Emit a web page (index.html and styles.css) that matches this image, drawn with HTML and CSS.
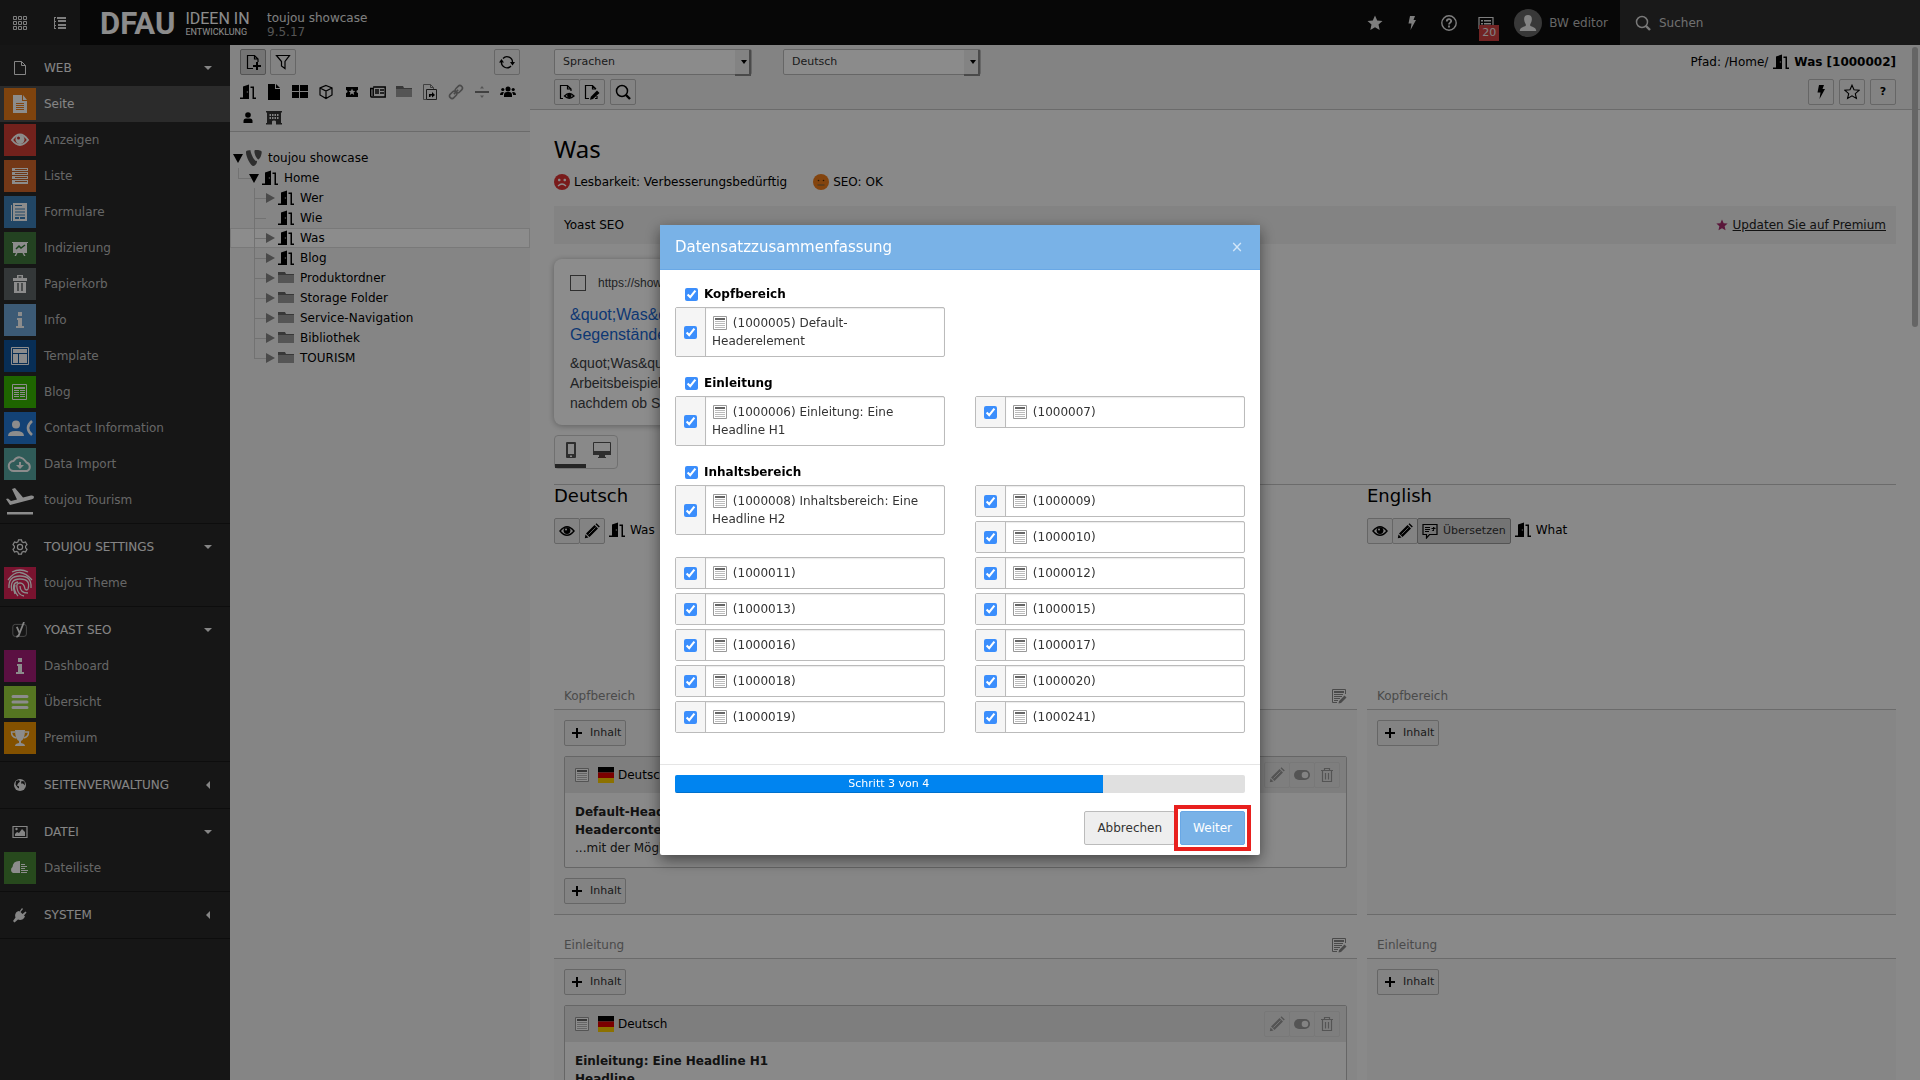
FILE: index.html
```html
<!DOCTYPE html>
<html lang="de">
<head>
<meta charset="utf-8">
<title>toujou showcase</title>
<link rel="stylesheet" href="styles.css">
</head>
<body>
<svg class="sprite" aria-hidden="true">
  <symbol id="grid" viewBox="0 0 16 16"><path fill="none" stroke="currentColor" d="M1.500 1.500h3v3h-3zM6.500 1.500h3v3h-3zM11.500 1.500h3v3h-3zM1.500 6.500h3v3h-3zM6.500 6.500h3v3h-3zM11.500 6.500h3v3h-3zM1.500 11.500h3v3h-3zM6.500 11.500h3v3h-3zM11.500 11.500h3v3h-3z"/></symbol>
  <symbol id="treelist" viewBox="0 0 16 16"><path fill="none" stroke="currentColor" d="M2.500 2v12M2 2.500h2M2 6.500h2M2 10.500h2M2 13.500h2"/><path fill="currentColor" d="M5 2h9v2H5zM6 5h8v2H6zM6 9h8v2H6zM6 12h8v2H6z"/></symbol>
  <symbol id="page" viewBox="0 0 16 16"><path fill="none" stroke="currentColor" d="M2.500 1.500h7l4 4v9h-11zM9.500 1.500v4h4"/></symbol>
  <symbol id="pagefull" viewBox="0 0 16 16"><path fill="currentColor" d="M2 0h7v5h5v11H2zM10 0l4 4h-4z"/></symbol>
  <symbol id="door" viewBox="0 0 16 16"><path fill="currentColor" d="M3 2.500L9 .5V15H0v-1.500h3zM10.500 2.500H14v11h2V15h-3.500V4h-2z"/><circle cx="7.400" cy="8" r=".8" fill="#aaa"/></symbol>
  <symbol id="folder" viewBox="0 0 16 16"><path fill="#9b9b9b" d="M0 4h16v9H0z"/><path fill="#666" d="M0 2h7l1 2h8v1H0z"/></symbol>
  <symbol id="squares" viewBox="0 0 16 16"><path fill="currentColor" d="M0 1h7v6H0zM8 1h8v6H8zM0 8h7v6H0zM8 8h8v6H8z"/></symbol>
  <symbol id="cube" viewBox="0 0 16 16"><path fill="none" stroke="currentColor" stroke-width="1.200" d="M8 1.500l6 2.500v7l-6 3.500L2 11V4zM2 4l6 3 6-3M8 7v7"/></symbol>
  <symbol id="ticket" viewBox="0 0 16 16"><path fill="currentColor" d="M2 3h12v3c-2 0-2 3 0 3v4H2V9c2 0 2-3 0-3z"/><path fill="#eee" d="M8 4.500l1 2.200 2.400.2-1.800 1.600.6 2.400L8 9.600l-2.200 1.300.6-2.400-1.800-1.600 2.400-.2z"/></symbol>
  <symbol id="news" viewBox="0 0 16 16"><path fill="none" stroke="currentColor" stroke-width="1.400" d="M3.200 3h12v10H1.500q-.8 0-.8-1V4.500h2.500V12"/><path fill="#444" d="M5 5h4v5H5zM10 5h4v2h-4zM10 8h4v2h-4z"/></symbol>
  <symbol id="shortcut" viewBox="0 0 16 16"><path fill="none" stroke="#777" d="M4 15.500H1.500V.5h7l3 3V5M8.500.5v3h3"/><path fill="none" stroke="#333" d="M4.500 5.500h10v10h-10z"/><path d="M7 13v-3h3V8l3 3-3 2.500V11.500H8.500V13z"/></symbol>
  <symbol id="link" viewBox="0 0 16 16"><g fill="none" stroke="#888" stroke-width="1.600" transform="rotate(-45 8 8)"><rect x="0" y="5.500" width="8" height="5" rx="2.500"/><rect x="8" y="5.500" width="8" height="5" rx="2.500"/><path d="M5 8h6"/></g></symbol>
  <symbol id="divider" viewBox="0 0 16 16"><path fill="#777" d="M1 7h14v2H1z"/><path fill="#999" d="M8 2l2 2.500H6zM8 14l2-2.500H6z"/></symbol>
  <symbol id="users" viewBox="0 0 16 16"><g fill="currentColor"><circle cx="8" cy="5" r="2.500"/><circle cx="2.800" cy="5.500" r="1.600"/><circle cx="13.200" cy="5.500" r="1.600"/><path d="M4 13V11q0-3 3-3h2q3 0 3 3v2zM0 11q0-3 3-3l1 .5q-1.200 1-1.200 2.500zM16 11q0-3-3-3l-1 .5q1.200 1 1.200 2.500z"/></g></symbol>
  <symbol id="user" viewBox="0 0 16 16"><g fill="currentColor"><circle cx="8" cy="5" r="2.800"/><path d="M3.500 13V11q0-2.500 2.500-2.500h4q2.500 0 2.500 2.500v2z"/></g></symbol>
  <symbol id="building" viewBox="0 0 16 16"><path fill="#333" fill-rule="evenodd" d="M0 1h16v1.500h-1V13h1v1.500h-6v-3q0-1-2-1t-2 1v3H0V13h1V2.500H0zM3.500 4v2H5V4zM6 4v2h1.500V4zM8.500 4v2H10V4zM11 4v2h1.500V4zM3.500 7v2H5V7zM6 7v2h1.500V7zM8.500 7v2H10V7zM11 7v2h1.500V7z"/></symbol>
  <symbol id="pageplus" viewBox="0 0 16 16"><path fill="none" stroke="currentColor" stroke-width="1.200" d="M8 14.500H2.500v-13h7l3.500 3.500V8M9.500 1.500v3.500h3.500"/><path fill="currentColor" d="M11 8h2v3h3v2h-3v3h-2v-3H8v-2h3z"/></symbol>
  <symbol id="filter" viewBox="0 0 16 16"><path fill="none" stroke="currentColor" stroke-width="1.200" d="M1.500 1.500h13l-4.500 6v7l-3.500-2.500V7.500z"/></symbol>
  <symbol id="refresh" viewBox="0 0 16 16"><path fill="none" stroke="currentColor" stroke-width="1.300" d="M4 4.500a5.500 5.500 0 0 1 9.500 4M12 12A5.500 5.500 0 0 1 2.500 7.500"/><path fill="currentColor" d="M11 8h5l-2.500 3.500zM0 8.500h5L2.500 5z"/></symbol>
  <symbol id="pageeye" viewBox="0 0 16 16"><path fill="none" stroke="currentColor" stroke-width="1.200" d="M4 14.500H1.500v-13h7l3.500 3.500V7M8.500 1.500v3.500h3.500"/><path fill="none" stroke="currentColor" stroke-width="1.300" d="M5.500 12q4.800-5 9.500 0-4.700 4.500-9.500 0z"/><circle cx="10.300" cy="11.800" r="2.200" fill="currentColor"/></symbol>
  <symbol id="pageedit" viewBox="0 0 16 16"><path fill="none" stroke="currentColor" stroke-width="1.200" d="M5 14.500H1.500v-13h7l3.500 3.500M8.500 1.500v3.500h3.500M11 14.500h2V12"/><path fill="currentColor" d="M13 6.500L15.500 9 9 15l-3 .8.800-3z"/></symbol>
  <symbol id="search" viewBox="0 0 16 16"><circle cx="7" cy="7" r="5.500" fill="none" stroke="currentColor" stroke-width="1.500"/><path stroke="currentColor" stroke-width="2.400" d="M11 11l4 4"/></symbol>
  <symbol id="bolt" viewBox="0 0 16 16"><path fill="currentColor" d="M6 1h5L9.500 5H12L6.500 15 7.500 8.500H4.500z"/></symbol>
  <symbol id="star" viewBox="0 0 16 16"><path fill="currentColor" d="M8 .5l2.200 5 5.300.5-4 3.600 1.200 5.400L8 12.200 3.300 15l1.200-5.400-4-3.600 5.300-.5z"/></symbol>
  <symbol id="staro" viewBox="0 0 16 16"><path fill="none" stroke="currentColor" stroke-width="1.100" d="M8 1.200l2 4.600 5 .5-3.700 3.400L12.400 14.500 8 11.900 3.600 14.500l1.100-4.800L1 6.300l5-.5z"/></symbol>
  <symbol id="help" viewBox="0 0 16 16"><circle cx="8" cy="8" r="7.200" fill="none" stroke="currentColor" stroke-width="1.400"/><path fill="none" stroke="currentColor" stroke-width="1.800" d="M5.800 6.500c0-3 4.400-3 4.400-.4C10.200 7.700 8 7.600 8 9.600M8 10.600v2"/></symbol>
  <symbol id="sys" viewBox="0 0 16 16"><path fill="none" stroke="currentColor" stroke-width="1.200" d="M1 2.500h14v11H1z"/><path fill="currentColor" d="M3 5h2v1.500H3zM6 5h7v1.500H6zM3 8h2v1.500H3zM6 8h7v1.500H6z"/></symbol>
  <symbol id="avatar" viewBox="0 0 28 28"><circle cx="14" cy="14" r="14" fill="#666"/><path fill="#eee" d="M14 6c3 0 4.200 2 3.800 5-.3 2-1 3.500-1.600 4.300v1.500c2 1.200 6 1.600 6 5.200H5.800c0-3.600 4-4 6-5.200v-1.500C11.200 14.500 10.500 13 10.200 11 9.800 8 11 6 14 6z"/></symbol>
  <symbol id="typo3" viewBox="0 0 16 16"><path fill="#555" d="M11 10.800c-.3.100-.5.100-.8.100-2.300 0-5.700-8-5.700-10.600 0-.2 0-.3.100-.3C2.500.2.600.7.200 1.200 0 1.400 0 1.800 0 2.400 0 6.400 4.400 16 7.500 16c1.400 0 3.800-2.400 3.500-5.200zM10 0c2.900 0 5.700.5 5.700 2.100 0 3.300-2 7.300-3.100 7.300C10.700 9.400 8.400 4.100 8.400 1.500 8.400.300 8.800 0 10 0z"/></symbol>
  <symbol id="record" viewBox="0 0 16 16"><path fill="#fff" stroke="#999" d="M1.500 1.500h13v13h-13z"/><path fill="#666" d="M3 3h10v2H3z"/><path fill="#bbb" d="M3 6h10v1H3zM3 8h10v1H3zM3 10h10v1H3zM3 12h10v1H3z"/></symbol>
  <symbol id="flag" viewBox="0 0 16 16"><path d="M0 0h16v5.500H0z"/><path fill="#e00000" d="M0 5.500h16V11H0z"/><path fill="#ffce00" d="M0 11h16v5H0z"/></symbol>
  <symbol id="eye" viewBox="0 0 16 16"><path fill="none" stroke="currentColor" stroke-width="1.400" d="M1 8q7-8.500 14 0-7 8.500-14 0z"/><circle cx="8" cy="7.600" r="3.400" fill="currentColor"/><circle cx="7" cy="6.500" r="1" fill="#eee"/></symbol>
  <symbol id="pencil" viewBox="0 0 16 16"><path fill="currentColor" d="M10.500 2l3.500 3.500-8.500 8.500L2 10.500zM1.500 11.500L4.500 14.500.8 15.200zM11.500 1.200L12.500.3 15.800 3.500l-1 1z"/><path stroke="#eee" stroke-width=".7" d="M4.500 11.500l7-7"/></symbol>
  <symbol id="toggle" viewBox="0 0 16 16"><rect y="3" width="16" height="10" rx="5" fill="currentColor"/><circle cx="11" cy="8" r="3.300" fill="#eee"/></symbol>
  <symbol id="trash" viewBox="0 0 16 16"><path fill="none" stroke="currentColor" stroke-width="1.200" d="M2 3.500h12M5.500 3V1.500h5V3M3.500 4v10.500h9V4M6.500 6v6.500M9.500 6v6.500"/></symbol>
  <symbol id="listedit" viewBox="0 0 16 16"><path fill="none" stroke="currentColor" d="M6 14.500H1.500v-13h13V6"/><path fill="currentColor" d="M3 3h10v2H3zM3 6h9v1H3zM3 8h8v1H3zM3 10h6v1H3zM3 12h4v1H3zM13.500 7.500L15.500 9.500 10 15l-2.500.6.6-2.500z"/></symbol>
  <symbol id="translate" viewBox="0 0 16 16"><path fill="none" stroke="currentColor" stroke-width="1.200" d="M1 1.500h14v10H7.500L4.500 15v-3.500H1z"/><path fill="currentColor" d="M3 4h5v1H3zM3 6h5v1H3zM3 8h4v1H3zM9.500 5h4v1h-4zM11 4h1v4h-1zM9.800 7.300l3-3 .6.6-3 3z"/></symbol>
  <symbol id="plus" viewBox="0 0 16 16"><path fill="currentColor" d="M7 3h2v4h4v2H9v4H7V9H3V7h4z"/></symbol>
  <symbol id="phone" viewBox="0 0 16 16"><path fill="#555" fill-rule="evenodd" d="M4 0h8q1 0 1 1v14q0 1-1 1H4q-1 0-1-1V1q0-1 1-1zM5 2v10h6V2zM7 13.500V15h2v-1.500z"/></symbol>
  <symbol id="desktop" viewBox="0 0 18 16"><path fill="none" stroke="#555" d="M.5.500h17v9H.5z"/><path fill="#555" d="M0 9h18v4h-6v2h1v1H5v-1h1v-2H0z"/></symbol>
  <symbol id="sad" viewBox="0 0 16 16"><circle cx="8" cy="8" r="8" fill="#dc3232"/><path fill="none" stroke="#fff" stroke-width="1.300" d="M4 12q4-4 8 0M4 6h2.500M5.200 4.800v2.500M9.500 6H12M10.800 4.800v2.500"/></symbol>
  <symbol id="neutral" viewBox="0 0 16 16"><circle cx="8" cy="8" r="8" fill="#ee7c1b"/><path fill="none" stroke="#8a6a40" stroke-width="1.300" d="M4.500 11h7"/><circle cx="5.500" cy="6.500" r=".8" fill="#532b00"/><circle cx="10.500" cy="6.500" r=".8" fill="#532b00"/></symbol>
  <symbol id="gear" viewBox="0 0 16 16"><path fill="none" stroke="currentColor" stroke-width="1.200" d="M6.500.8h3l.5 2 1.500.8 2-.6 1.500 2.600L13.600 7.200v1.600L15 10.400 13.500 13l-2-.6-1.500.8-.5 2h-3l-.5-2-1.500-.8-2 .6L1 10.400l1.400-1.600V7.200L1 5.600 2.500 3l2 .6 1.500-.8z"/><circle cx="8" cy="8" r="2.600" fill="none" stroke="currentColor" stroke-width="1.200"/></symbol>
  <symbol id="yoast" viewBox="0 0 20 20"><rect x="1" y="3" width="17" height="15" rx="3" fill="none" stroke="#999"/><path fill="none" stroke="currentColor" stroke-width="2.200" d="M6 6l3.500 8M15 0L9.500 14q-1 4-4 4.500"/></symbol>
  <symbol id="globe" viewBox="0 0 16 16"><circle cx="8" cy="8" r="6" fill="currentColor"/><path fill="#222" d="M4 4l3-1 1 1.500-2 2-1 2 2 1v2l-1.500-1-2-3zM9.500 4l3 .5.500 4-2-2-2 0z"/></symbol>
  <symbol id="image" viewBox="0 0 16 16"><path fill="none" stroke="currentColor" stroke-width="1.200" d="M1 2.500h14v11H1z"/><path fill="currentColor" d="M3 12V10l2-2 2 1 3-4 3 3v4z"/><circle cx="4.500" cy="5" r="1.200" fill="currentColor"/></symbol>
  <symbol id="plug" viewBox="0 0 16 16"><path fill="currentColor" d="M10 1l1 1-2.500 3 2 2L13.500 4.500l1 1L12 8.500l1 1c-1.500 3.500-5 4-7 3L2.500 15.500 1 14l2.500-3.500C2.500 8 3.500 5 6.500 4l1 .5z"/></symbol>
  <symbol id="m-page" viewBox="0 0 32 32"><path fill="#fff" d="M9 7h9v6h5v12H9zM19 7l4 5h-4z"/><path stroke="#ee8020" d="M12 15.500h8M12 17.500h8M12 19.500h8M12 21.500h8"/></symbol>
  <symbol id="m-eye" viewBox="0 0 32 32"><path fill="none" stroke="#fff" stroke-width="2" d="M8 16q8-11 16 0-8 10-16 0z"/><circle cx="16" cy="15.500" r="4.500" fill="#fff"/><circle cx="14.500" cy="14" r="1.500" fill="#c33"/></symbol>
  <symbol id="m-list" viewBox="0 0 32 32"><path fill="#fff" d="M8 8h16v16H8z"/><path stroke="#c8672a" d="M8 11.500h16M8 15.500h16M8 19.500h16"/><path stroke="#c8672a" d="M11 9.500h12M11 13.500h12M11 17.500h12M11 21.500h12"/></symbol>
  <symbol id="m-form" viewBox="0 0 32 32"><path fill="#fff" d="M9 7h14v18H9zM7 9h1v16H7z"/><path fill="none" stroke="#3b80bb" d="M11 9.500h7M11 13h10M11 16h10M11 19h10"/><path fill="#3b80bb" d="M11 21h4v2h-4zM16 21h5v2h-5z"/></symbol>
  <symbol id="m-chart" viewBox="0 0 32 32"><path fill="#fff" d="M8 10h16v1H8zM9 11h14v10H9zM12 21h1.500L12 24h-1.500zM18.500 21H20l1.500 3H20z"/><path fill="none" stroke="#2f7d32" stroke-width="1.500" d="M12 17l3-3 2 2 4-3"/></symbol>
  <symbol id="m-trash" viewBox="0 0 32 32"><path fill="#fff" d="M9 10h4V7h6v3h4v3H9zM10 14h12v11H10z"/><path stroke="#5d6566" stroke-width="1.500" d="M14 15v8M18 15v8M14.500 9h3"/></symbol>
  <symbol id="m-info" viewBox="0 0 32 32"><path fill="#fff" d="M14 8h4v4h-4zM13 14h5v8h2v2h-8v-2h2v-6h-1z"/></symbol>
  <symbol id="m-tpl" viewBox="0 0 32 32"><path fill="none" stroke="#fff" d="M7.500 7.500h17v17h-17z"/><path fill="#fff" d="M9 9h14v4H9zM9 14h5v9H9zM15 14h8v9h-8z"/></symbol>
  <symbol id="m-blog" viewBox="0 0 32 32"><path fill="none" stroke="#fff" d="M8.500 8.500h14v15h-14z"/><path stroke="#fff" d="M10 12h11" stroke-width="2"/><path stroke="#fff" d="M10 14.500h5M16 14.500h5M10 16.500h5M16 16.500h5M10 18.500h5M16 18.500h5M10 20.500h5M16 20.500h5"/></symbol>
  <symbol id="m-contact" viewBox="0 0 32 32"><circle cx="12" cy="12.500" r="4" fill="#fff"/><path fill="#fff" d="M4 24q0-5 8-5t8 5z"/><path fill="none" stroke="#fff" stroke-width="2.600" d="M28 9q-8 7 0 14"/></symbol>
  <symbol id="m-cloud" viewBox="0 0 32 32"><path fill="none" stroke="#fff" stroke-width="2" d="M10 23a5 5 0 0 1-.5-10q6-8 13 1.500a4.500 4.500 0 0 1 .5 8.500z"/><path fill="#fff" d="M15 14h2v3h3l-4 4-4-4h3z"/></symbol>
  <symbol id="m-plane" viewBox="0 0 32 32"><path fill="#fff" d="M3 28h26v2.500H3zM2 15l2-.5 3 2.500 6-1.500L8 5l3-1 8 9.500 8-2q3-.3 3 1.500t-2 2.300L6 21z"/></symbol>
  <symbol id="m-finger" viewBox="0 0 32 32"><g fill="none" stroke="#fff" stroke-width="1.300"><path d="M8 5q8-4 16 0M4 13Q10 5 16 5.500T28 13M5 21Q4 9 16 9t11 12M8 24Q5 12 16 12t8 10q-1 2-3 0-1-6-5-6t-3 5q1 7 7 8M11 27Q7 16 14 15M16 19q0 7 8 7M14 29Q9 23 11 18"/></g></symbol>
  <symbol id="m-lines" viewBox="0 0 32 32"><path stroke="#fff" stroke-width="3" stroke-linecap="round" d="M9 10.500h14M9 16h14M9 21.500h14"/></symbol>
  <symbol id="m-cup" viewBox="0 0 32 32"><path fill="#fff" d="M11 8h10q0 9-4 11v2q4 .5 4 3H11q0-2.500 4-3v-2q-4-2-4-11z"/><path fill="none" stroke="#fff" stroke-width="1.500" d="M11 10H7.500q0 5 5 6M21 10h3.500q0 5-5 6"/></symbol>
  <symbol id="m-files" viewBox="0 0 32 32"><path fill="#fff" d="M16 9v12h-7a3.500 3.500 0 0 1-.5-6Q9 8.500 16 9z"/><path stroke="#fff" d="M17 12.500h4M17 14.500h6M17 16.500h4M17 18.500h7M17 20.500h6"/></symbol>
</svg>

<header class="topbar">
  <div class="topbar-switch">
    <button class="icon-btn" aria-label="Module"><svg class="ic"><use href="#grid"/></svg></button>
    <button class="icon-btn" aria-label="Seitenbaum"><svg class="ic"><use href="#treelist"/></svg></button>
  </div>
  <div class="logo"><span class="logo-name">DFAU</span><span class="logo-claim"><span class="claim-top">IDEEN IN</span><span class="claim-bottom">ENTWICKLUNG</span></span></div>
  <div class="site"><span>toujou showcase</span><span class="site-version">9.5.17</span></div>
  <nav class="tools">
    <button class="icon-btn" aria-label="Lesezeichen"><svg class="ic"><use href="#star"/></svg></button>
    <button class="icon-btn" aria-label="Cache"><svg class="ic"><use href="#bolt"/></svg></button>
    <button class="icon-btn" aria-label="Hilfe"><svg class="ic"><use href="#help"/></svg></button>
    <button class="icon-btn" aria-label="Systeminformation"><svg class="ic"><use href="#sys"/></svg><span class="badge">20</span></button>
    <button class="profile"><svg class="avatar"><use href="#avatar"/></svg>BW editor</button>
  </nav>
  <label class="search"><svg class="ic"><use href="#search"/></svg><input type="text" placeholder="Suchen" aria-label="Suchen"></label>
</header>

<div class="shell">
  <nav class="modules">
    <section class="group">
      <button class="group-head"><svg class="ic"><use href="#page"/></svg><span>WEB</span><i class="caret"></i></button>
      <a href="#" class="module active"><svg class="tile t-page"><use href="#m-page"/></svg>Seite</a>
      <a href="#" class="module"><svg class="tile t-view"><use href="#m-eye"/></svg>Anzeigen</a>
      <a href="#" class="module"><svg class="tile t-list"><use href="#m-list"/></svg>Liste</a>
      <a href="#" class="module"><svg class="tile t-form"><use href="#m-form"/></svg>Formulare</a>
      <a href="#" class="module"><svg class="tile t-index"><use href="#m-chart"/></svg>Indizierung</a>
      <a href="#" class="module"><svg class="tile t-trash"><use href="#m-trash"/></svg>Papierkorb</a>
      <a href="#" class="module"><svg class="tile t-info"><use href="#m-info"/></svg>Info</a>
      <a href="#" class="module"><svg class="tile t-tpl"><use href="#m-tpl"/></svg>Template</a>
      <a href="#" class="module"><svg class="tile t-blog"><use href="#m-blog"/></svg>Blog</a>
      <a href="#" class="module"><svg class="tile t-contact"><use href="#m-contact"/></svg>Contact Information</a>
      <a href="#" class="module"><svg class="tile t-import"><use href="#m-cloud"/></svg>Data Import</a>
      <a href="#" class="module"><svg class="tile"><use href="#m-plane"/></svg>toujou Tourism</a>
    </section>
    <section class="group">
      <button class="group-head"><svg class="ic"><use href="#gear"/></svg><span>TOUJOU SETTINGS</span><i class="caret"></i></button>
      <a href="#" class="module"><svg class="tile t-theme"><use href="#m-finger"/></svg>toujou Theme</a>
    </section>
    <section class="group">
      <button class="group-head"><svg class="ic"><use href="#yoast"/></svg><span>YOAST SEO</span><i class="caret"></i></button>
      <a href="#" class="module"><svg class="tile t-dash"><use href="#m-info"/></svg>Dashboard</a>
      <a href="#" class="module"><svg class="tile t-over"><use href="#m-lines"/></svg>Übersicht</a>
      <a href="#" class="module"><svg class="tile t-prem"><use href="#m-cup"/></svg>Premium</a>
    </section>
    <section class="group">
      <button class="group-head"><svg class="ic"><use href="#globe"/></svg><span>SEITENVERWALTUNG</span><i class="caret closed"></i></button>
    </section>
    <section class="group">
      <button class="group-head"><svg class="ic"><use href="#image"/></svg><span>DATEI</span><i class="caret"></i></button>
      <a href="#" class="module"><svg class="tile t-files"><use href="#m-files"/></svg>Dateiliste</a>
    </section>
    <section class="group">
      <button class="group-head"><svg class="ic"><use href="#plug"/></svg><span>SYSTEM</span><i class="caret closed"></i></button>
    </section>
  </nav>

  <aside class="pagetree">
    <div class="tree-tools">
      <div class="tree-bar">
        <button class="btn pressed" aria-label="Neue Seite"><svg class="ic"><use href="#pageplus"/></svg></button>
        <button class="btn" aria-label="Filter"><svg class="ic"><use href="#filter"/></svg></button>
        <button class="btn push" aria-label="Neu laden"><svg class="ic"><use href="#refresh"/></svg></button>
      </div>
      <div class="doktypes">
        <svg class="ic"><use href="#door"/></svg><svg class="ic"><use href="#pagefull"/></svg><svg class="ic"><use href="#squares"/></svg><svg class="ic"><use href="#cube"/></svg><svg class="ic"><use href="#ticket"/></svg><svg class="ic"><use href="#news"/></svg><svg class="ic"><use href="#folder"/></svg><svg class="ic"><use href="#shortcut"/></svg><svg class="ic"><use href="#link"/></svg><svg class="ic"><use href="#divider"/></svg><svg class="ic"><use href="#users"/></svg><svg class="ic"><use href="#user"/></svg><svg class="ic"><use href="#building"/></svg>
      </div>
    </div>
    <ul class="tree">
      <li class="node root"><i class="arrow open"></i><svg class="ic"><use href="#typo3"/></svg>toujou showcase</li>
      <li class="node home"><i class="arrow open"></i><svg class="ic"><use href="#door"/></svg>Home</li>
      <li class="node leaf"><i class="arrow"></i><svg class="ic"><use href="#door"/></svg>Wer</li>
      <li class="node leaf"><i class="arrow none"></i><svg class="ic"><use href="#door"/></svg>Wie</li>
      <li class="node leaf selected"><i class="arrow"></i><svg class="ic"><use href="#door"/></svg>Was</li>
      <li class="node leaf"><i class="arrow"></i><svg class="ic"><use href="#door"/></svg>Blog</li>
      <li class="node leaf"><i class="arrow"></i><svg class="ic"><use href="#folder"/></svg>Produktordner</li>
      <li class="node leaf"><i class="arrow"></i><svg class="ic"><use href="#folder"/></svg>Storage Folder</li>
      <li class="node leaf"><i class="arrow"></i><svg class="ic"><use href="#folder"/></svg>Service-Navigation</li>
      <li class="node leaf"><i class="arrow"></i><svg class="ic"><use href="#folder"/></svg>Bibliothek</li>
      <li class="node leaf last"><i class="arrow"></i><svg class="ic"><use href="#folder"/></svg>TOURISM</li>
    </ul>
  </aside>

  <main class="content">
    <div class="docheader">
      <div class="doc-row">
        <div class="selects">
          <span class="select"><select aria-label="Ansicht"><option>Sprachen</option></select></span>
          <span class="select"><select aria-label="Sprache"><option>Deutsch</option></select></span>
        </div>
        <div class="path">Pfad: /Home/ <svg class="ic"><use href="#door"/></svg> <strong>Was [1000002]</strong></div>
      </div>
      <div class="doc-row">
        <div class="btn-row">
          <div class="btn-group"><button class="btn" aria-label="Ansehen"><svg class="ic"><use href="#pageeye"/></svg></button><button class="btn" aria-label="Bearbeiten"><svg class="ic"><use href="#pageedit"/></svg></button></div>
          <button class="btn" aria-label="Suche"><svg class="ic"><use href="#search"/></svg></button>
        </div>
        <div class="btn-row">
          <button class="btn" aria-label="Cache löschen"><svg class="ic"><use href="#bolt"/></svg></button>
          <button class="btn" aria-label="Lesezeichen"><svg class="ic"><use href="#staro"/></svg></button>
          <button class="btn"><strong>?</strong></button>
        </div>
      </div>
    </div>

    <div class="body">
      <h1>Was</h1>
      <div class="scores">
        <span class="score"><svg class="ic"><use href="#sad"/></svg>Lesbarkeit: Verbesserungsbedürftig</span>
        <span class="score"><svg class="ic"><use href="#neutral"/></svg>SEO: OK</span>
      </div>
      <div class="yoast-bar"><span>Yoast SEO</span><span class="premium"><svg class="ic-small"><use href="#star"/></svg><a href="#">Updaten Sie auf Premium</a></span></div>
      <div class="snippet">
        <div class="snippet-url"><span class="favicon"></span>https://showcase.toujou.de</div>
        <div class="snippet-title">&amp;quot;Was&amp;quot; – Themen und<br>Gegenstände</div>
        <p>&amp;quot;Was&amp;quot; zeigt Ihnen<br>Arbeitsbeispiele, je<br>nachdem ob Sie suchen</p>
      </div>
      <div class="devices">
        <button class="device on" aria-label="Mobil"><svg class="ic"><use href="#phone"/></svg></button>
        <button class="device" aria-label="Desktop"><svg class="ic-wide"><use href="#desktop"/></svg></button>
      </div>

      <div class="languages">
        <div class="lang">
          <h2>Deutsch</h2>
          <div class="lang-tools"><div class="btn-group"><button class="btn" aria-label="Ansehen"><svg class="ic"><use href="#eye"/></svg></button><button class="btn" aria-label="Bearbeiten"><svg class="ic"><use href="#pencil"/></svg></button></div><span class="lang-page"><svg class="ic"><use href="#door"/></svg>Was</span></div>
        </div>
        <div class="lang">
          <h2>English</h2>
          <div class="lang-tools"><div class="btn-group"><button class="btn" aria-label="Ansehen"><svg class="ic"><use href="#eye"/></svg></button><button class="btn" aria-label="Bearbeiten"><svg class="ic"><use href="#pencil"/></svg></button><button class="btn pressed text"><svg class="ic"><use href="#translate"/></svg>Übersetzen</button></div><span class="lang-page"><svg class="ic"><use href="#door"/></svg>What</span></div>
        </div>

        <section class="col">
          <div class="col-head">Kopfbereich<svg class="ic"><use href="#listedit"/></svg></div>
          <div class="col-body">
            <button class="btn text"><svg class="ic"><use href="#plus"/></svg>Inhalt</button>
            <article class="element">
              <div class="element-head"><svg class="ic"><use href="#record"/></svg><svg class="ic"><use href="#flag"/></svg><span>Deutsch</span><div class="btn-group faded"><button class="btn" aria-label="Bearbeiten"><svg class="ic"><use href="#pencil"/></svg></button><button class="btn" aria-label="Umschalten"><svg class="ic"><use href="#toggle"/></svg></button><button class="btn" aria-label="Löschen"><svg class="ic"><use href="#trash"/></svg></button></div></div>
              <div class="element-body"><strong>Default-Headerelement</strong><br><strong>Headercontent</strong><br>...mit der Möglichkeit, Inhalte einzufügen</div>
            </article>
            <button class="btn text"><svg class="ic"><use href="#plus"/></svg>Inhalt</button>
          </div>
        </section>
        <section class="col">
          <div class="col-head">Kopfbereich</div>
          <div class="col-body"><button class="btn text"><svg class="ic"><use href="#plus"/></svg>Inhalt</button></div>
        </section>

        <section class="col">
          <div class="col-head">Einleitung<svg class="ic"><use href="#listedit"/></svg></div>
          <div class="col-body">
            <button class="btn text"><svg class="ic"><use href="#plus"/></svg>Inhalt</button>
            <article class="element">
              <div class="element-head"><svg class="ic"><use href="#record"/></svg><svg class="ic"><use href="#flag"/></svg><span>Deutsch</span><div class="btn-group faded"><button class="btn" aria-label="Bearbeiten"><svg class="ic"><use href="#pencil"/></svg></button><button class="btn" aria-label="Umschalten"><svg class="ic"><use href="#toggle"/></svg></button><button class="btn" aria-label="Löschen"><svg class="ic"><use href="#trash"/></svg></button></div></div>
              <div class="element-body"><strong>Einleitung: Eine Headline H1</strong><br><strong>Headline</strong></div>
            </article>
          </div>
        </section>
        <section class="col">
          <div class="col-head">Einleitung</div>
          <div class="col-body"><button class="btn text"><svg class="ic"><use href="#plus"/></svg>Inhalt</button></div>
        </section>
      </div>
    </div>
    <div class="scroll-thumb"></div>
  </main>
</div>

<div class="backdrop">
  <div class="modal" role="dialog" aria-labelledby="modal-title">
    <div class="modal-head"><h4 id="modal-title">Datensatzzusammenfassung</h4><button class="close" aria-label="Schließen">×</button></div>
    <div class="modal-body">
      <section>
        <label class="group-check"><input type="checkbox" checked>Kopfbereich</label>
        <div class="records">
          <label class="record"><span class="check"><input type="checkbox" checked></span><span class="record-text"><svg class="ic"><use href="#record"/></svg> (1000005) Default-Headerelement</span></label>
        </div>
      </section>
      <section>
        <label class="group-check"><input type="checkbox" checked>Einleitung</label>
        <div class="records">
          <label class="record"><span class="check"><input type="checkbox" checked></span><span class="record-text"><svg class="ic"><use href="#record"/></svg> (1000006) Einleitung: Eine Headline H1</span></label>
          <label class="record"><span class="check"><input type="checkbox" checked></span><span class="record-text"><svg class="ic"><use href="#record"/></svg> (1000007)</span></label>
        </div>
      </section>
      <section>
        <label class="group-check"><input type="checkbox" checked>Inhaltsbereich</label>
        <div class="records">
          <label class="record tall"><span class="check"><input type="checkbox" checked></span><span class="record-text"><svg class="ic"><use href="#record"/></svg> (1000008) Inhaltsbereich: Eine Headline H2</span></label>
          <label class="record"><span class="check"><input type="checkbox" checked></span><span class="record-text"><svg class="ic"><use href="#record"/></svg> (1000009)</span></label>
          <label class="record"><span class="check"><input type="checkbox" checked></span><span class="record-text"><svg class="ic"><use href="#record"/></svg> (1000010)</span></label>
          <label class="record"><span class="check"><input type="checkbox" checked></span><span class="record-text"><svg class="ic"><use href="#record"/></svg> (1000011)</span></label>
          <label class="record"><span class="check"><input type="checkbox" checked></span><span class="record-text"><svg class="ic"><use href="#record"/></svg> (1000012)</span></label>
          <label class="record"><span class="check"><input type="checkbox" checked></span><span class="record-text"><svg class="ic"><use href="#record"/></svg> (1000013)</span></label>
          <label class="record"><span class="check"><input type="checkbox" checked></span><span class="record-text"><svg class="ic"><use href="#record"/></svg> (1000015)</span></label>
          <label class="record"><span class="check"><input type="checkbox" checked></span><span class="record-text"><svg class="ic"><use href="#record"/></svg> (1000016)</span></label>
          <label class="record"><span class="check"><input type="checkbox" checked></span><span class="record-text"><svg class="ic"><use href="#record"/></svg> (1000017)</span></label>
          <label class="record"><span class="check"><input type="checkbox" checked></span><span class="record-text"><svg class="ic"><use href="#record"/></svg> (1000018)</span></label>
          <label class="record"><span class="check"><input type="checkbox" checked></span><span class="record-text"><svg class="ic"><use href="#record"/></svg> (1000020)</span></label>
          <label class="record"><span class="check"><input type="checkbox" checked></span><span class="record-text"><svg class="ic"><use href="#record"/></svg> (1000019)</span></label>
          <label class="record"><span class="check"><input type="checkbox" checked></span><span class="record-text"><svg class="ic"><use href="#record"/></svg> (1000241)</span></label>
        </div>
      </section>
    </div>
    <div class="modal-foot">
      <div class="progress"><div class="progress-bar" style="width:75%">Schritt 3 von 4</div></div>
      <div class="actions"><button class="action">Abbrechen</button><button class="action primary">Weiter</button></div>
    </div>
  </div>
</div>
</body>
</html>
```
FILE: styles.css
```css
* { box-sizing: border-box; }

body {
  margin: 0;
  height: 100vh;
  display: flex;
  flex-direction: column;
  overflow: hidden;
  background: #fafafa;
  color: #000;
  font: 12px/18px Verdana, "DejaVu Sans", sans-serif;
}

button, input, select { font: inherit; color: inherit; }
button { cursor: pointer; }
a { color: inherit; }
h1, h2, h4, p, ul { margin: 0; padding: 0; font-weight: 400; }

.sprite { display: none; }
.ic { width: 16px; height: 16px; flex: none; overflow: visible; }
.ic-wide { width: 18px; height: 16px; flex: none; }
.ic-small { width: 12px; height: 12px; flex: none; }

/* Top bar */
.topbar { display: flex; align-items: stretch; height: 45px; flex: none; background: #0d0d0d; color: #e6e6e6; }
.topbar-switch { display: flex; width: 80px; background: #262626; }
.icon-btn { position: relative; display: flex; flex: 1; align-items: center; justify-content: center; padding: 0; border: 0; background: none; }
.logo { display: flex; align-items: center; gap: 10px; width: 152px; margin-left: 20px; padding-top: 3px; color: #fff; font-family: Roboto, sans-serif; white-space: nowrap; }
.logo-name { font-size: 31px; line-height: 36px; font-weight: 700; }
.logo-claim { display: flex; flex-direction: column; }
.claim-top { font-size: 16px; line-height: 16px; }
.claim-bottom { font-size: 9px; line-height: 11px; }
.site { display: flex; flex-direction: column; justify-content: center; margin-left: 15px; padding-top: 4px; line-height: 14px; }
.site-version { color: #999; }
.tools { display: flex; margin-left: auto; }
.tools .icon-btn { width: 37px; flex: none; }
.badge { position: absolute; left: 12px; top: 25px; width: 20px; height: 16px; background: #d04040; color: #eee; font-size: 11px; line-height: 16px; text-align: center; }
.profile { display: flex; align-items: center; gap: 7px; padding: 0 12px 0 10px; border: 0; background: none; color: #bbb; }
.avatar { width: 28px; height: 28px; }
.search { display: flex; align-items: center; gap: 8px; width: 300px; padding-left: 15px; background: #2e2e2e; color: #ddd; }
.search input { flex: 1; min-width: 0; padding: 0; border: 0; background: none; }
.search input::placeholder { color: #ccc; opacity: 1; }

.shell { display: flex; flex: 1; min-height: 0; }

/* Module menu */
.modules { width: 230px; flex: none; background: #292929; color: #bbb; overflow: hidden; }
.group { padding: 5px 0; border-bottom: 1px solid #181818; }
.group-head { display: flex; align-items: center; width: 100%; height: 36px; padding: 0 18px 0 12px; gap: 16px; border: 0; background: none; color: #f2f2f2; }
.caret { margin-left: auto; border: 4px solid transparent; border-top-color: currentColor; border-bottom: 0; }
.caret.closed { margin-right: 2px; border: 4px solid transparent; border-right-color: currentColor; border-left: 0; }
.module { display: flex; align-items: center; gap: 8px; height: 36px; padding-left: 4px; text-decoration: none; }
.module.active { background: #4f4f4f; color: #f2f2f2; }
.tile { width: 32px; height: 32px; }
.t-page { background: #e67a1a; }
.t-view { background: #d03c34; }
.t-list { background: #d1672a; }
.t-form { background: #3c80b8; }
.t-index { background: #40783c; }
.t-trash { background: #5d6566; }
.t-info { background: #6da4d6; }
.t-tpl { background: #10559b; }
.t-blog { background: #38b800; }
.t-contact { background: #2479d6; }
.t-import { background: #57a6a0; }
.t-theme { background: #dc2456; }
.t-dash { background: #a61e78; }
.t-over { background: #9bd63c; }
.t-prem { background: #ee9400; }
.t-files { background: #488536; }

/* Page tree */
.pagetree { width: 300px; flex: none; background: #f3f3f3; }
.tree-tools { padding: 4px 10px 4px; background: #eee; border-bottom: 1px solid #c3c3c3; }
.tree-bar { display: flex; gap: 4px; }
.push { margin-left: auto; }
.doktypes { display: flex; flex-wrap: wrap; gap: 10px; padding: 9px 0 1px; }
.tree { padding-top: 16px; list-style: none; }
.node { position: relative; display: flex; align-items: center; height: 20px; white-space: nowrap; }
.node .ic { margin-right: 6px; }
.home { padding-left: 16px; }
.leaf { padding-left: 32px; }
.selected { background: #fff; box-shadow: inset 0 0 0 1px #ddd; }
.arrow { width: 16px; display: flex; justify-content: center; }
.arrow::before { content: ""; border: 5px solid transparent; border-left: 9px solid #888; border-right: 0; }
.arrow.open::before { border: 5px solid transparent; border-top: 9px solid #000; border-bottom: 0; }
.arrow.none::before { border: 0; }
.leaf::before { content: ""; position: absolute; left: 24px; top: 0; bottom: 0; border-left: 1px solid #d0d0d0; }
.leaf.last::before { bottom: 10px; }
.leaf::after { content: ""; position: absolute; left: 24px; top: 10px; width: 12px; border-top: 1px solid #d0d0d0; }
.home { z-index: 0; }
.home::before { content: ""; position: absolute; left: 8px; top: 0; width: 12px; height: 10px; border: solid #d0d0d0; border-width: 0 0 1px 1px; z-index: -1; }

/* Buttons */
.btn { display: flex; align-items: center; justify-content: center; width: 26px; height: 26px; padding: 0; border: 1px solid #bbb; border-radius: 2px; background: #eee; font-size: 11px; }
.btn.pressed { background: #d4d4d4; border-color: #9a9a9a; }
.btn.text { width: max-content; padding: 0 4px; gap: 5px; color: #333; }
.btn.text .ic { color: #000; }
.btn-group { display: flex; }
.btn-group .btn + .btn { margin-left: -1px; }
.btn-row { display: flex; gap: 5px; }
.faded { margin-left: auto; color: #999; }
.faded .btn { border-color: #dadada; background: transparent; }

/* Content */
.content { position: relative; flex: 1; min-width: 0; overflow: hidden; background: #fafafa; }
.docheader { display: flex; flex-direction: column; gap: 4px; padding: 4px 24px; background: #eee; border-bottom: 1px solid #c3c3c3; }
.doc-row { display: flex; justify-content: space-between; align-items: center; }
.selects { display: flex; gap: 31px; }
.select { position: relative; }
.select select { display: block; width: 198px; height: 26px; padding: 0 8px; border: 1px solid #bbb; border-radius: 2px; background: #fefefe; color: #333; font-size: 11px; appearance: none; }
.select::before { content: ""; position: absolute; right: 1px; top: 1px; width: 14px; height: 24px; background: #eee; border: solid #888; border-width: 0 2px 2px 0; }
.select::after { content: ""; position: absolute; right: 5px; top: 11px; border: 3px solid transparent; border-top: 4px solid #000; border-bottom: 0; }
.path { display: flex; align-items: center; gap: 5px; }
.body { padding: 24px 24px 0; }
h1 { font: 24px/30px "Noto Sans", sans-serif; }
.scores { display: flex; gap: 26px; margin-top: 9px; }
.score { display: flex; align-items: center; gap: 4px; }
.yoast-bar { display: flex; align-items: center; justify-content: space-between; height: 38px; margin-top: 15px; padding: 0 10px; background: #eee; }
.premium { display: flex; align-items: center; gap: 5px; color: #a4286a; }
.premium a { color: #222; }
.snippet { width: 400px; height: 166px; margin-top: 15px; padding: 16px; border-radius: 8px; background: #fff; box-shadow: 0 1px 6px rgba(0, 0, 0, .3); color: #3c4043; font: 14px/20px "Liberation Sans", Arial, sans-serif; }
.snippet-url { display: flex; align-items: center; gap: 12px; height: 16px; font-size: 12px; }
.favicon { width: 16px; height: 16px; border: 1px solid #555; }
.snippet-title { margin: 14px 0 8px; color: #1967d2; font-size: 16px; line-height: 20px; }
.devices { display: flex; width: 64px; height: 34px; margin-top: 10px; border: 1px solid #ccc; border-radius: 4px; }
.device { display: flex; flex: 1; align-items: center; justify-content: center; padding: 0; border: 0; border-bottom: 4px solid transparent; background: none; }
.device.on { border-bottom-color: #444; }

.languages { display: grid; grid-template-columns: 803fr 529fr; column-gap: 10px; margin-top: 15px; border-top: 1px solid #c3c3c3; }
.lang { height: 181px; }
h2 { font-size: 18px; line-height: 22px; }
.lang-tools { display: flex; gap: 4px; margin-top: 11px; }
.lang-page { display: flex; align-items: center; gap: 5px; height: 24px; }
.col { display: flex; flex-direction: column; }
.col-head { display: flex; align-items: center; justify-content: space-between; height: 43px; padding: 16px 10px 0; color: #888; }
.col-body { display: flex; flex-direction: column; gap: 10px; flex: 1; padding: 10px; background: #f4f4f4; border: solid #c3c3c3; border-width: 1px 0; }
.element { border: 1px solid #bbb; border-radius: 2px; background: #fafafa; }
.element-head { display: flex; align-items: center; height: 36px; padding: 0 6px 0 9px; background: #e6e6e6; }
.element-head .ic + .ic { margin: 0 4px 0 8px; }
.element-body { padding: 10px; color: #222; }
.scroll-thumb { position: absolute; right: 2px; top: 2px; width: 6px; height: 280px; border-radius: 3px; background: #b8b8b8; }

/* Modal */
.backdrop { position: fixed; inset: 0; display: flex; align-items: center; justify-content: center; background: rgba(0, 0, 0, .45); }
.modal { width: 600px; border-radius: 2px; background: #fff; box-shadow: 0 5px 15px rgba(0, 0, 0, .5); }
.modal-head { display: flex; align-items: center; justify-content: space-between; height: 45px; padding: 0 15px; border-bottom: 1px solid #69a8e6; background: #79b2e7; color: #fff; }
h4 { font-size: 15px; line-height: 18px; }
.close { width: 16px; padding: 0; border: 0; background: none; color: #d3e6f8; font-size: 15px; line-height: 18px; }
.modal-body { display: flex; flex-direction: column; gap: 17px; padding: 15px 15px 31px; }
.modal-body input { width: 13px; height: 13px; margin: 0; accent-color: #3b8efc; }
.group-check { display: flex; align-items: center; gap: 6px; margin-bottom: 4px; padding-left: 10px; font-weight: 700; }
.records { display: grid; grid-template-columns: 1fr 1fr; gap: 4px 30px; align-items: start; }
.record { display: flex; border: 1px solid #bbb; border-radius: 2px; color: #333; }
.record.tall { grid-row: span 2; }
.check { display: flex; align-items: center; justify-content: center; width: 30px; border-right: 1px solid #bbb; background: #f5f5f5; }
.record-text { flex: 1; padding: 6px; box-shadow: inset 0 1px 1px rgba(0, 0, 0, .08); }
.record-text .ic { margin-right: 1px; vertical-align: -4px; }
.modal-foot { padding: 10px 15px; border-top: 1px solid #e5e5e5; }
.progress { height: 18px; border-radius: 2px; background: #e0e0e0; overflow: hidden; }
.progress-bar { height: 18px; background: #0084f0; box-shadow: inset 0 -1px 0 rgba(0, 0, 0, .15); color: #fff; font-size: 11px; text-align: center; }
.actions { display: flex; justify-content: flex-end; gap: 5px; margin-top: 18px; }
.action { position: relative; height: 34px; padding: 0 12px; border: 1px solid #bbb; border-radius: 2px; background: #eee; color: #333; }
.action.primary { border-color: #69a8e6; background: #79b2e7; color: #fff; }
.action.primary::after { content: ""; position: absolute; inset: -7px; border: 4px solid #e8201e; }
```
